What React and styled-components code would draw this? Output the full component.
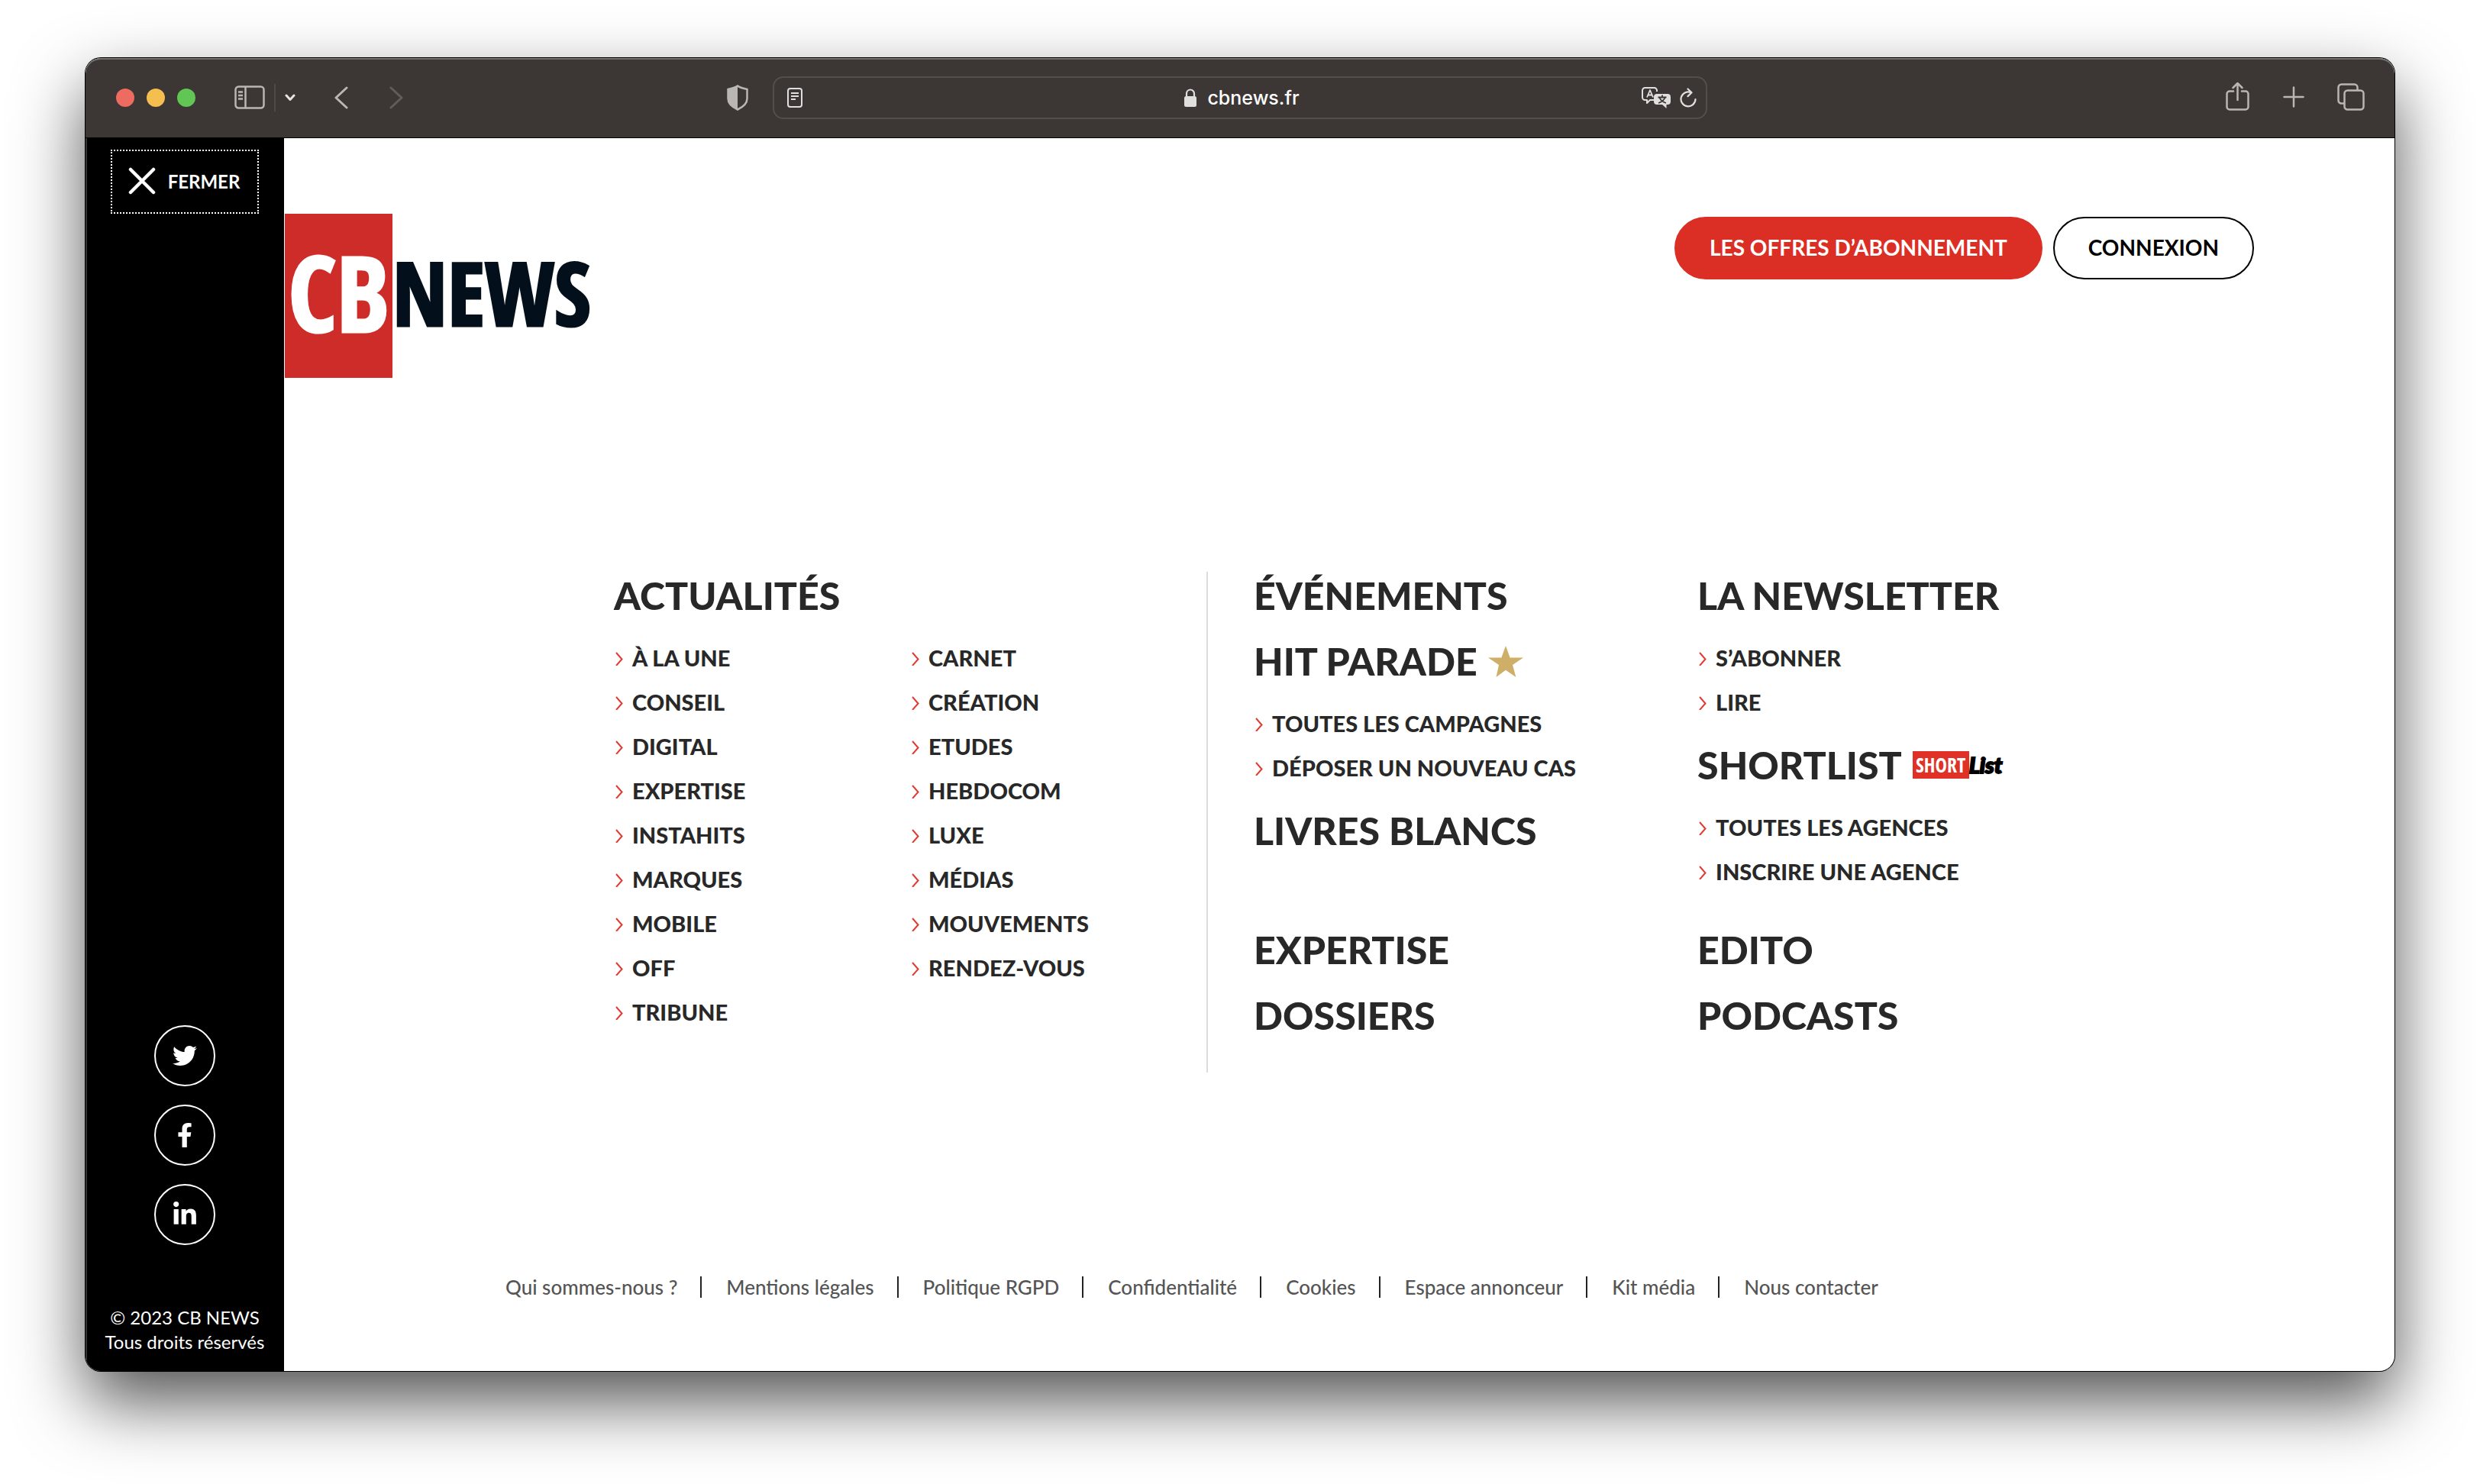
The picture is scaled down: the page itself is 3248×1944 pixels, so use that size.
import React from "react";
import styled, { createGlobalStyle } from "styled-components";
import { FaTwitter, FaFacebookF, FaLinkedinIn } from "react-icons/fa";

const GlobalStyle = createGlobalStyle`
  *, *::before, *::after { box-sizing: border-box; }
  body { margin: 0; background: #fff; font-family: Lato, "Open Sans", sans-serif; }
  h2, ul, p { margin: 0; padding: 0; }
  ul { list-style: none; }
  a { color: inherit; text-decoration: none; }
  button { font: inherit; cursor: pointer; }
  svg { display: block; flex: none; }
`;

const condensed = `"Noto Sans ExtraCondensed", "Open Sans Condensed", "Noto Sans", sans-serif`;

const Desktop = styled.div`
  display: flex;
  min-height: 100vh;
  padding: 76px 112px 148px;
`;

const Window = styled.div`
  flex: 1;
  min-width: 0;
  display: flex;
  flex-direction: column;
  overflow: hidden;
  border-radius: 20px;
  background: #fff;
  box-shadow: 0 0 0 1px #000, 0 40px 90px rgba(0, 0, 0, 0.68);
`;

/* Browser chrome */

const Toolbar = styled.div`
  display: grid;
  grid-template-columns: 1fr minmax(400px, 1224px) 1fr;
  align-items: center;
  height: 105px;
  background: #3c3734;
  border-bottom: 1px solid #000;
  border-radius: 20px 20px 0 0;
  box-shadow: inset 0 2px 0 #75716e;
  color: #bab6b3;
`;

const ToolGroup = styled.div`
  display: flex;
  align-items: center;
  gap: ${(p) => p.$gap}px;
  padding: ${(p) => p.$pad};
  justify-content: ${(p) => p.$justify || "flex-start"};
`;

const Light = styled.span`
  width: 24px;
  height: 24px;
  border-radius: 50%;
  background: ${(p) => p.$color};
`;

const IconButton = styled.button`
  display: flex;
  padding: 0;
  border: 0;
  background: none;
  color: ${(p) => p.$color || "inherit"};
`;

const ToolDivider = styled.span`
  width: 2px;
  height: 36px;
  background: #4d4946;
`;

const Push = styled.span`
  flex: 1;
`;

const AddressBar = styled.div`
  display: grid;
  grid-template-columns: 1fr auto 1fr;
  align-items: center;
  height: 56px;
  padding: 0 12px 0 17px;
  border: 2px solid #524e4b;
  border-radius: 14px;
  color: #e0dfde;
`;

const Address = styled.span`
  display: flex;
  align-items: center;
  gap: 14px;
  color: #fff;
  font: 500 25px/32px Inter, Roboto, sans-serif;
`;

const AddressTools = styled.span`
  display: flex;
  align-items: center;
  justify-content: flex-end;
  gap: 12px;
`;

/* Site */

const Page = styled.div`
  flex: 1;
  display: flex;
`;

const Sidebar = styled.aside`
  flex: none;
  display: flex;
  flex-direction: column;
  align-items: center;
  width: 260px;
  padding: 15px 0 22px;
  background: #000;
  box-shadow: inset 2px 0 0 #333;
  color: #fff;
`;

const CloseButton = styled.button`
  display: flex;
  align-items: center;
  justify-content: center;
  gap: 16px;
  width: 194px;
  height: 84px;
  padding: 0 2px 2px 0;
  border: 2px dotted #fff;
  background: none;
  color: #fff;
  font-size: 24px;
  font-weight: 700;
`;

const Socials = styled.div`
  display: flex;
  flex-direction: column;
  gap: 24px;
  margin-top: auto;
`;

const SocialLink = styled.a`
  display: flex;
  align-items: center;
  justify-content: center;
  width: 80px;
  height: 80px;
  border: 2px solid #fff;
  border-radius: 50%;
`;

const Copyright = styled.p`
  margin-top: 79px;
  font-size: 24px;
  line-height: 32px;
  text-align: center;
`;

const Content = styled.div`
  flex: 1;
  min-width: 0;
  display: flex;
  flex-direction: column;
  padding: 99px 0 96px;
`;

const Header = styled.header`
  display: flex;
  justify-content: space-between;
  align-items: flex-start;
  padding: 0 184px 0 1px;
`;

const Logo = styled.a`
  display: flex;
  align-items: stretch;
  height: 215px;
  font-family: ${condensed};
  font-weight: 900;
  line-height: 205px;
  color: #03101c;
  -webkit-text-stroke: 3px currentColor;
`;

const LogoBlock = styled.span`
  width: 141px;
  background: #ce2c29;
  color: #fff;
  font-size: 136px;
  text-align: center;
`;

const LogoRest = styled.span`
  font-size: 115px;
`;

const Actions = styled.div`
  display: flex;
  gap: 14px;
  padding-top: 4px;
`;

const Pill = styled.button`
  height: 82px;
  padding: 0 44px 2px;
  border: 2px solid ${(p) => (p.$primary ? "#db2f26" : "#000")};
  border-radius: 41px;
  background: ${(p) => (p.$primary ? "#db2f26" : "#fff")};
  color: ${(p) => (p.$primary ? "#fff" : "#000")};
  font-size: 28px;
  font-weight: 700;
`;

const Menu = styled.nav`
  display: grid;
  grid-template-columns: 776fr 1124fr;
  width: 100%;
  max-width: 1900px;
  margin: 254px auto 0;
  color: #282828;
`;

const MorePanel = styled.div`
  display: grid;
  grid-template-columns: 580fr 480fr;
  gap: 40px 0;
  padding: 0 0 40px 60px;
  border-left: 2px solid #dcdcdc;
`;

const Stack = styled.div`
  display: flex;
  flex-direction: column;
  gap: 20px;
`;

const Title = styled.h2`
  display: flex;
  align-items: center;
  gap: 14px;
  height: 66px;
  padding-bottom: 4px;
  font-size: 50px;
  font-weight: 900;
  line-height: 62px;
  white-space: nowrap;
`;

const List = styled.ul`
  margin: 18px 0 2px;
  columns: ${(p) => p.$columns || 1};
  column-gap: 0;
`;

const Item = styled.li`
  height: 58px;
  break-inside: avoid;
`;

const ItemLink = styled.a`
  display: flex;
  align-items: center;
  gap: 12px;
  padding-left: 2px;
  font-size: 29px;
  font-weight: 900;
  line-height: 58px;
  white-space: nowrap;
`;

const ShortBadge = styled.span`
  display: flex;
  height: 36px;
  font: 900 26px/36px ${condensed};
  color: #fff;
`;

const ShortBox = styled.span`
  width: 74px;
  background: #e03127;
  text-align: center;
`;

const ShortScript = styled.span`
  color: #000;
  font: italic 900 29px/36px Lato, sans-serif;
  -webkit-text-stroke: 2px #000;
`;

const Footer = styled.footer`
  display: flex;
  flex-wrap: wrap;
  margin-top: auto;
  padding-left: 290px;
  color: #555;
  font-size: 26px;
  font-weight: 500;
  line-height: 28px;
`;

const FooterLink = styled.a`
  & + & {
    margin-left: 30px;
    padding-left: 32px;
    border-left: 2px solid #222;
  }
`;

const Arrow = () => (
  <svg width="10" height="20" viewBox="0 0 10 20" fill="none" stroke="#e23a31" strokeWidth="2" aria-hidden="true">
    <path d="M1 3l7.500 8.500L1 20" />
  </svg>
);

const Star = () => (
  <svg width="46" height="41" viewBox="0 0 46 41" fill="#cfae67" aria-hidden="true">
    <path d="M23 0l5.600 15.500H46L32 25l4.400 16L23 31.800 10.500 41 14 25 0 15.500h17.400z" />
  </svg>
);

const SidebarIcon = () => (
  <svg width="40" height="32" viewBox="0 0 40 32" fill="none" stroke="currentColor" strokeWidth="2.500">
    <rect x="1.500" y="1.500" width="37" height="28" rx="4" />
    <path d="M14.500 2v27M5 8.500h6M5 13h6M5 17.500h6" />
  </svg>
);

const Chevron = ({ w, h, d, s }) => (
  <svg width={w} height={h} viewBox={`0 0 ${w} ${h}`} fill="none" stroke="currentColor" strokeWidth={s} strokeLinecap="round" strokeLinejoin="round">
    <path d={d} />
  </svg>
);

const Shield = () => (
  <svg width="28" height="34" viewBox="0 0 28 34" fill="none" stroke="currentColor" strokeWidth="2.500">
    <path d="M14 1.500C17 4 22 5 26.500 6v12c0 6-5 11-12.500 14.500C6.500 29 1.500 24 1.500 18V6C6 5 11 4 14 1.500z" />
    <path d="M14 1.500v31C6.500 29 1.500 24 1.500 18V6C6 5 11 4 14 1.500z" fill="currentColor" stroke="none" />
  </svg>
);

const Reader = () => (
  <svg width="20" height="26" viewBox="0 0 20 26" fill="none" stroke="currentColor" strokeWidth="2">
    <rect x="1" y="1" width="18" height="24" rx="3" />
    <path d="M5 7h10M5 11h10M5 15h6" />
  </svg>
);

const Lock = () => (
  <svg width="16" height="24" viewBox="0 0 16 24" fill="#e0dfde">
    <rect x="0" y="10" width="16" height="14" rx="2.500" />
    <path d="M3 11V6.500a5 5 0 0 1 10 0V11" fill="none" stroke="#e0dfde" strokeWidth="2.200" />
  </svg>
);

const Translate = () => (
  <svg width="38" height="28" viewBox="0 0 38 28" fill="none" stroke="currentColor" strokeWidth="2" strokeLinejoin="round">
    <path d="M16 17l-5 0-4 4v-4H4.500A3.500 3.500 0 0 1 1 13.500v-9A3.500 3.500 0 0 1 4.500 1h12A3.500 3.500 0 0 1 20 4.500V6" />
    <path d="M7 13.500L11 4l4 9.500M8.500 10.500h5" strokeWidth="1.800" />
    <path d="M20 9h14a4 4 0 0 1 4 4v6a4 4 0 0 1-4 4h-1.500v5L27 23h-7a4 4 0 0 1-4-4v-6a4 4 0 0 1 4-4z" fill="currentColor" stroke="none" />
    <path d="M27 10.500v3M21.500 13.500h11M30.500 14c-1.500 3.500-4 5.500-8.500 7M23.500 14c1.500 3.500 4 5.500 8.500 7" stroke="#3c3734" strokeWidth="1.800" />
  </svg>
);

const Reload = () => (
  <svg width="22" height="26" viewBox="0 0 22 26" fill="none" stroke="currentColor" strokeWidth="2.200" strokeLinecap="round" strokeLinejoin="round">
    <path d="M15 6.200A9.500 9.500 0 1 0 20.500 15M10.500 1.500l5 4.800-5 4.800" />
  </svg>
);

const Share = () => (
  <svg width="32" height="42" viewBox="0 0 32 42" fill="none" stroke="currentColor" strokeWidth="2.500" strokeLinecap="round" strokeLinejoin="round">
    <path d="M10 12.500H5A3.500 3.500 0 0 0 1.500 16v17A3.500 3.500 0 0 0 5 36.500h21a3.500 3.500 0 0 0 3.500-3.500V16a3.500 3.500 0 0 0-3.500-3.500h-5M15.500 24V2M9.500 8l6-6 6 6" />
  </svg>
);

const Plus = () => (
  <svg width="28" height="30" viewBox="0 0 28 30" fill="none" stroke="currentColor" strokeWidth="2.500" strokeLinecap="round">
    <path d="M14 1.500v25M1.500 14h25" />
  </svg>
);

const Tabs = () => (
  <svg width="36" height="38" viewBox="0 0 36 38" fill="none" stroke="currentColor" strokeWidth="2.500">
    <rect x="9.500" y="9.500" width="25" height="25" rx="4" />
    <path d="M9.500 26.500H5.500a4 4 0 0 1-4-4v-17a4 4 0 0 1 4-4h17a4 4 0 0 1 4 4v4" />
  </svg>
);

const Cross = () => (
  <svg width="36" height="36" viewBox="0 0 36 36" fill="none" stroke="currentColor" strokeWidth="4.500" strokeLinecap="round" aria-hidden="true">
    <path d="M3 3l30 30M33 3L3 33" />
  </svg>
);

const NEWS = [
  "À LA UNE", "CONSEIL", "DIGITAL", "EXPERTISE", "INSTAHITS", "MARQUES", "MOBILE", "OFF", "TRIBUNE",
  "CARNET", "CRÉATION", "ETUDES", "HEBDOCOM", "LUXE", "MÉDIAS", "MOUVEMENTS", "RENDEZ-VOUS",
];

const LEGAL = [
  "Qui sommes-nous ?", "Mentions légales", "Politique RGPD", "Confidentialité",
  "Cookies", "Espace annonceur", "Kit média", "Nous contacter",
];

const SOCIALS = [
  { label: "Twitter", Icon: FaTwitter, size: 32 },
  { label: "Facebook", Icon: FaFacebookF, size: 32 },
  { label: "LinkedIn", Icon: FaLinkedinIn, size: 34 },
];

function Section({ title, items, columns, children }) {
  return (
    <section>
      <Title>
        <a href="#">{title}</a>
        {children}
      </Title>
      {items && (
        <List $columns={columns}>
          {items.map((item) => (
            <Item key={item}>
              <ItemLink href="#">
                <Arrow />
                {item}
              </ItemLink>
            </Item>
          ))}
        </List>
      )}
    </section>
  );
}

function BrowserToolbar() {
  return (
    <Toolbar>
      <ToolGroup $gap={16} $pad="0 32px 0 40px">
        <Light $color="#ed6b60" />
        <Light $color="#f5bf4f" />
        <Light $color="#61c654" />
        <ToolGroup $gap={12} $pad="0 0 0 35px">
          <IconButton aria-label="Barre latérale"><SidebarIcon /></IconButton>
          <ToolDivider />
          <IconButton aria-label="Groupes d’onglets" $color="#e6e4e3">
            <Chevron w={14} h={10} s={3} d="M2 2l5 5.500L12 2" />
          </IconButton>
        </ToolGroup>
        <ToolGroup $gap={54} $pad="0 0 0 35px">
          <IconButton aria-label="Précédent"><Chevron w={18} h={30} s={3} d="M16 2L2 15l14 13" /></IconButton>
          <IconButton aria-label="Suivant" $color="#615d5a"><Chevron w={18} h={30} s={3} d="M2 2l14 13L2 28" /></IconButton>
        </ToolGroup>
        <Push />
        <IconButton aria-label="Rapport de confidentialité"><Shield /></IconButton>
      </ToolGroup>
      <AddressBar>
        <Reader />
        <Address><Lock />cbnews.fr</Address>
        <AddressTools>
          <IconButton aria-label="Traduire"><Translate /></IconButton>
          <IconButton aria-label="Recharger"><Reload /></IconButton>
        </AddressTools>
      </AddressBar>
      <ToolGroup $gap={43} $pad="0 39px 0 0" $justify="flex-end">
        <IconButton aria-label="Partager"><Share /></IconButton>
        <IconButton aria-label="Nouvel onglet"><Plus /></IconButton>
        <IconButton aria-label="Tous les onglets"><Tabs /></IconButton>
      </ToolGroup>
    </Toolbar>
  );
}

export default function App() {
  return (
    <Desktop>
      <GlobalStyle />
      <Window>
        <BrowserToolbar />
        <Page>
          <Sidebar>
            <CloseButton><Cross />FERMER</CloseButton>
            <Socials>
              {SOCIALS.map(({ label, Icon, size }) => (
                <SocialLink key={label} href="#" aria-label={label}><Icon size={size} /></SocialLink>
              ))}
            </Socials>
            <Copyright>© 2023 CB NEWS<br />Tous droits réservés</Copyright>
          </Sidebar>
          <Content>
            <Header>
              <Logo href="#">
                <LogoBlock>CB</LogoBlock>
                <LogoRest>NEWS</LogoRest>
              </Logo>
              <Actions>
                <Pill $primary>LES OFFRES D’ABONNEMENT</Pill>
                <Pill>CONNEXION</Pill>
              </Actions>
            </Header>
            <Menu>
              <Section title="ACTUALITÉS" items={NEWS} columns={2} />
              <MorePanel>
                <Stack>
                  <Section title="ÉVÉNEMENTS" />
                  <Section title="HIT PARADE" items={["TOUTES LES CAMPAGNES", "DÉPOSER UN NOUVEAU CAS"]}>
                    <Star />
                  </Section>
                  <Section title="LIVRES BLANCS" />
                </Stack>
                <Stack>
                  <Section title="LA NEWSLETTER" items={["S’ABONNER", "LIRE"]} />
                  <Section title="SHORTLIST" items={["TOUTES LES AGENCES", "INSCRIRE UNE AGENCE"]}>
                    <ShortBadge>
                      <ShortBox>SHORT</ShortBox>
                      <ShortScript>List</ShortScript>
                    </ShortBadge>
                  </Section>
                </Stack>
                <Stack>
                  <Section title="EXPERTISE" />
                  <Section title="DOSSIERS" />
                </Stack>
                <Stack>
                  <Section title="EDITO" />
                  <Section title="PODCASTS" />
                </Stack>
              </MorePanel>
            </Menu>
            <Footer>
              {LEGAL.map((label) => (
                <FooterLink key={label} href="#">{label}</FooterLink>
              ))}
            </Footer>
          </Content>
        </Page>
      </Window>
    </Desktop>
  );
}
